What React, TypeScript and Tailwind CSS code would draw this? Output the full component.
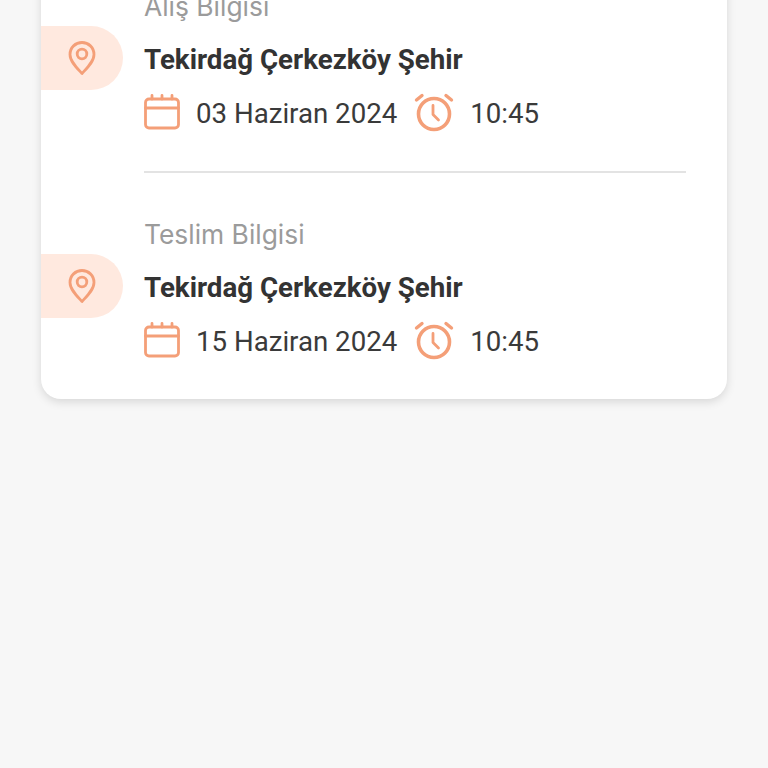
import React from "react";

function Pin() {
  return (
    <svg width="30" height="36" viewBox="0 0 30 36" fill="none" stroke="#f49f78" strokeWidth="2.8" strokeLinejoin="round">
      <path d="M15 33.5C10 28 3 21.5 3 14.5C3 7.5 8.5 2.5 15 2.5C21.5 2.5 27 7.5 27 14.5C27 21.5 20 28 15 33.5Z" />
      <circle cx="15" cy="14" r="4.8" />
    </svg>
  );
}

function Calendar() {
  return (
    <svg width="36" height="36" viewBox="0 0 36 36" fill="none" stroke="#f49f78" strokeWidth="2.8" strokeLinecap="round" strokeLinejoin="round">
      <rect x="1.5" y="5" width="33" height="29" rx="3.5" />
      <path d="M1.5 14H34.5M8 1.5V5M18 1.5V5M28 1.5V5" />
    </svg>
  );
}

function Alarm() {
  return (
    <svg width="40" height="40" viewBox="0 0 40 40" fill="none" stroke="#f49f78" strokeLinecap="round" strokeLinejoin="round">
      <circle cx="20" cy="22" r="15.5" strokeWidth="3.6" />
      <path d="M19 13.5V22.5L24.5 28" strokeWidth="2.8" />
      <path d="M2.5 8L8 3.5M37.5 8L32 3.5" strokeWidth="3.4" />
    </svg>
  );
}

function Section({ label, date }: { label: string; date: string }) {
  return (
    <div className="flex">
      <div className="pt-[34px] w-[103px] shrink-0">
        <div className="w-[82px] h-[64px] rounded-r-[32px] bg-[#ffe9df] flex items-center justify-center">
          <Pin />
        </div>
      </div>
      <div className="flex-1 mr-[41px]">
        <div className="h-[28px] leading-[28px] text-[26.4px] text-[#9b9b9b] font-['Inter',sans-serif]">{label}</div>
        <div className="mt-[26px] h-[28px] leading-[28px] text-[27.7px] font-bold text-[#333333] font-['Roboto',sans-serif]">
          Tekirdağ Çerkezköy Şehir
        </div>
        <div className="mt-[20px] h-[40px] flex items-center text-[27.65px] text-[#3a3a3a] font-['Roboto',sans-serif]">
          <span className="flex mb-[4px]"><Calendar /></span>
          <span className="ml-[16px]">{date}</span>
          <span className="ml-[17px] flex mb-[4px]"><Alarm /></span>
          <span className="ml-[16px]">10:45</span>
        </div>
      </div>
    </div>
  );
}

export default function App() {
  return (
    <div className="h-[768px] overflow-hidden bg-[#f7f7f7]">
      <div className="ml-[41px] w-[686px] -mt-[30px] pt-[22px] pb-[37px] bg-white rounded-b-[20px] shadow-[0_3px_10px_rgba(0,0,0,0.13)]">
        <Section label="Alış Bilgisi" date="03 Haziran 2024" />
        <div className="ml-[103px] mr-[41px] mt-[37px] mb-[47px] h-[2px] bg-[#e3e3e3]" />
        <Section label="Teslim Bilgisi" date="15 Haziran 2024" />
      </div>
    </div>
  );
}
